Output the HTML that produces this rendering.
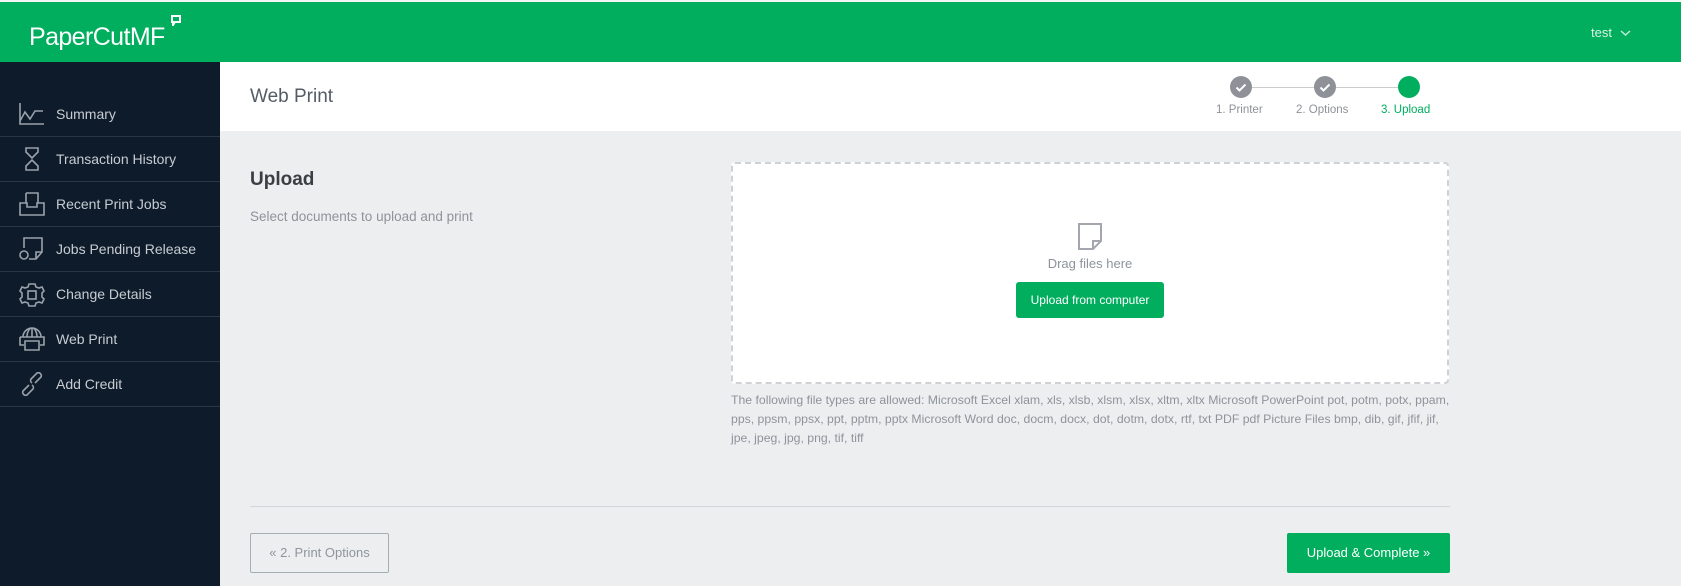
<!DOCTYPE html>
<html><head><meta charset="utf-8"><style>
*{box-sizing:border-box;margin:0;padding:0}
body{width:1681px;height:586px;overflow:hidden;background:#edeef0;font-family:"Liberation Sans",sans-serif;position:relative}
.top{position:absolute;left:0;top:0;width:1681px;height:2px;background:#f4f4f4}
.hdr{position:absolute;left:0;top:2px;width:1681px;height:60px;background:#00ae5e}
.logo{position:absolute;left:29px;top:21px;color:#fff;font-size:25px;letter-spacing:-0.6px}
.user{position:absolute;left:1591px;top:23px;color:#d8f3e4;font-size:13px}
.side{position:absolute;left:0;top:62px;width:220px;height:524px;background:#0e1b2a}
.item{position:absolute;left:0;width:220px;height:45px;border-bottom:1px solid #2a3644;color:#c7ccd2;font-size:14px}
.item span{position:absolute;left:56px;top:14px}
.item svg{position:absolute;left:19px;top:10px}
.ch{position:absolute;left:220px;top:62px;width:1461px;height:69px;background:#fff}
.ch h1{position:absolute;left:30px;top:24px;font-weight:normal;font-size:19px;color:#555b66}
.circ{position:absolute;top:76px;width:22px;height:22px;border-radius:50%;background:#8e9198}
.lbl{position:absolute;top:104px;font-size:11.5px;color:#8e9198}
.line{position:absolute;top:87px;height:1px;background:#ccc}
h2{position:absolute;left:250px;top:169px;font-size:19px;color:#3a3e45}
.sub{position:absolute;left:250px;top:209px;font-size:13.5px;color:#8e939b}
.drop{position:absolute;left:731px;top:162px;width:718px;height:222px;background:#fff;border:2px dashed #cfd1d4;border-radius:4px}
.drag{position:absolute;left:0;width:100%;top:92px;text-align:center;color:#8e939b;font-size:13px}
.ubtn{position:absolute;left:283px;top:118px;width:148px;height:36px;background:#00ae5e;border-radius:3px;color:#fff;font-size:12px;text-align:center;line-height:36px}
.types{position:absolute;left:731px;top:391px;width:760px;font-size:12.25px;line-height:19px;color:#8e939b;white-space:nowrap}
.hr{position:absolute;left:250px;top:506px;width:1200px;height:1px;background:#d3d5d8}
.back{position:absolute;left:250px;top:533px;width:139px;height:40px;border:1px solid #a3b0b0;border-radius:2px;color:#8e959e;font-size:13px;text-align:center;line-height:38px}
.next{position:absolute;left:1287px;top:533px;width:163px;height:40px;background:#00ae5e;border-radius:2px;color:#fff;font-size:13px;text-align:center;line-height:40px}
</style></head><body>
<div class="top"></div>
<div class="hdr">
<div class="logo">PaperCut<span style="font-weight:300">MF</span></div>
<svg style="position:absolute;left:171px;top:13px" width="10" height="11" viewBox="0 0 10 11"><path d="M1 1h8v6H4L2 10V7H1z" fill="none" stroke="#fff" stroke-width="2"/></svg>
<div class="user">test <svg width="11" height="8" viewBox="0 0 11 8" style="margin-left:4px"><path d="M1 2l4.5 4L10 2" fill="none" stroke="#bfead3" stroke-width="1.5"/></svg></div>
</div>
<div class="side">
<div class="item" style="top:30px"><svg width="26" height="24" viewBox="0 0 26 24" fill="none" stroke="#9aa1aa" stroke-width="1.6"><path d="M1 1v21h24M1 19l5-9 5 7 5-8 5 0 3 0"/></svg><span>Summary</span></div>
<div class="item" style="top:75px"><svg width="26" height="24" viewBox="0 0 26 24" fill="none" stroke="#9aa1aa" stroke-width="1.6"><path d="M7 1h12v4l-6 6-6-6zM7 23h12v-4l-6-6-6 6z"/></svg><span>Transaction History</span></div>
<div class="item" style="top:120px"><svg width="26" height="24" viewBox="0 0 26 24" fill="none" stroke="#9aa1aa" stroke-width="1.6"><path d="M7 1h12v10M7 1v10M1 11h7v4h10v-4h7v12H1z"/></svg><span>Recent Print Jobs</span></div>
<div class="item" style="top:165px"><svg width="26" height="24" viewBox="0 0 26 24" fill="none" stroke="#9aa1aa" stroke-width="1.6"><path d="M5 11V1h18v14l-6 7h-7M17 22v-7h6"/><circle cx="5" cy="18" r="4"/></svg><span>Jobs Pending Release</span></div>
<div class="item" style="top:210px"><svg width="26" height="26" viewBox="0 0 26 26" fill="none" stroke="#9aa1aa" stroke-width="1.6"><path d="M10 2h6l1 3 3 1 3-1 2 4-2 2v4l2 2-2 4-3-1-3 1-1 3h-6l-1-3-3-1-3 1-2-4 2-2v-4l-2-2 2-4 3 1 3-1z"/><rect x="9" y="9" width="8" height="8"/></svg><span>Change Details</span></div>
<div class="item" style="top:255px"><svg width="26" height="24" viewBox="0 0 26 24" fill="none" stroke="#9aa1aa" stroke-width="1.6"><path d="M4 10a9 9 0 0 1 18 0M13 1v9M8 10a5 9 0 0 1 10 0M1 10h24v8h-4M1 10v8h4M6 14h14v9H6z"/></svg><span>Web Print</span></div>
<div class="item" style="top:300px"><svg width="26" height="24" viewBox="0 0 26 24" fill="none" stroke="#9aa1aa" stroke-width="1.6"><path d="M10 13l-6 6a3 3 0 0 0 4 4l6-6a3 3 0 0 0-1-4M16 11l6-6a3 3 0 0 0-4-4l-6 6a3 3 0 0 0 1 4"/></svg><span>Add Credit</span></div>
</div>
<div class="ch"><h1>Web Print</h1></div>
<div class="line" style="left:1252px;width:146px"></div>
<div class="circ" style="left:1230px"><svg width="22" height="22"><path d="M6.5 11.5l3 3 6-6" fill="none" stroke="#fff" stroke-width="2"/></svg></div>
<div class="circ" style="left:1314px"><svg width="22" height="22"><path d="M6.5 11.5l3 3 6-6" fill="none" stroke="#fff" stroke-width="2"/></svg></div>
<div class="circ" style="left:1398px;background:#00ae5e"></div>
<div class="lbl" style="left:1216px">1. Printer</div>
<div class="lbl" style="left:1296px">2. Options</div>
<div class="lbl" style="left:1381px;color:#00ae5e">3. Upload</div>
<h2>Upload</h2>
<div class="sub">Select documents to upload and print</div>
<div class="drop">
<svg style="position:absolute;left:345px;top:59px" width="24" height="27" viewBox="0 0 24 27" fill="none" stroke="#a3a7ad" stroke-width="2"><path d="M1 1h22v17l-8 8H1zM15 26v-8h8"/></svg>
<div class="drag">Drag files here</div>
<div class="ubtn">Upload from computer</div>
</div>
<div class="types">The following file types are allowed: Microsoft Excel xlam, xls, xlsb, xlsm, xlsx, xltm, xltx Microsoft PowerPoint pot, potm, potx, ppam,<br>pps, ppsm, ppsx, ppt, pptm, pptx Microsoft Word doc, docm, docx, dot, dotm, dotx, rtf, txt PDF pdf Picture Files bmp, dib, gif, jfif, jif,<br>jpe, jpeg, jpg, png, tif, tiff</div>
<div class="hr"></div>
<div class="back">« 2. Print Options</div>
<div class="next">Upload &amp; Complete »</div>
</body></html>
